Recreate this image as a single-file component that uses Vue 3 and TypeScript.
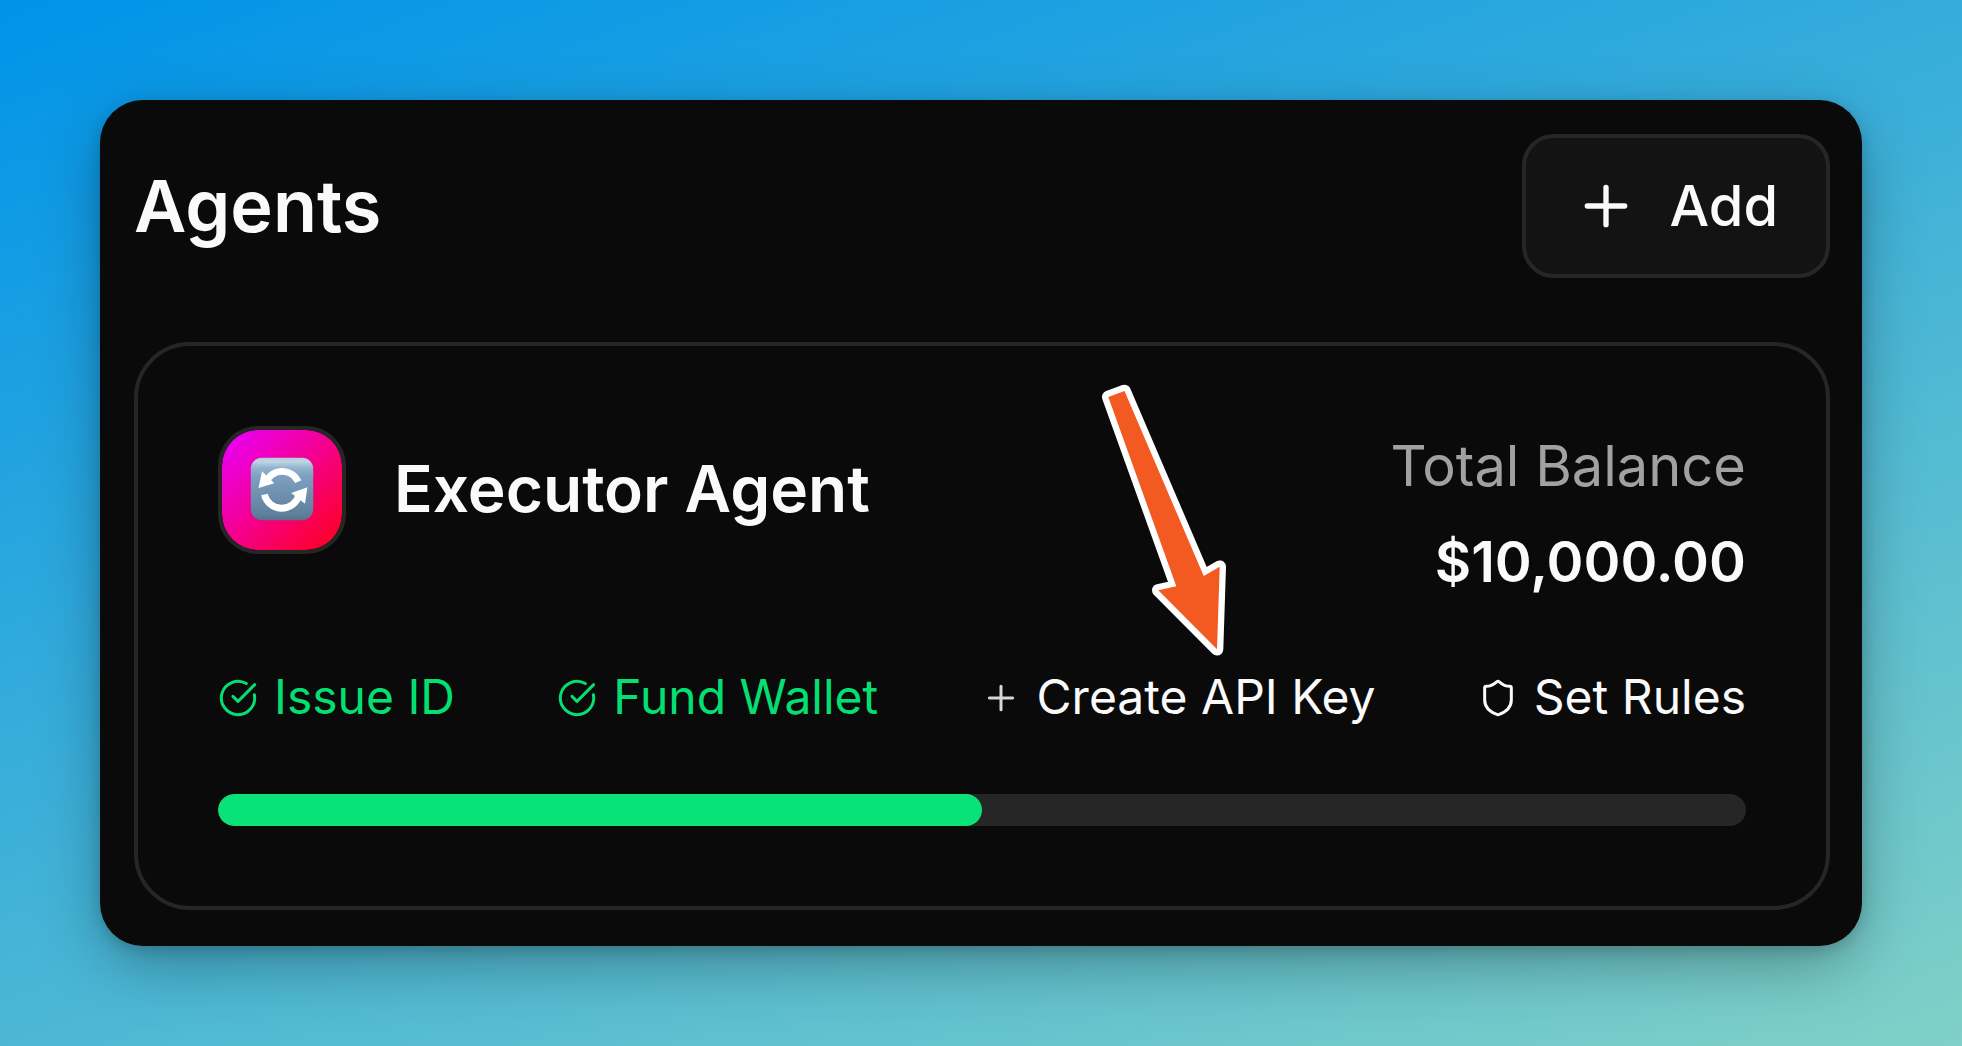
<script setup lang="ts">
type StepIcon = 'check' | 'plus' | 'shield'

interface Step {
  label: string
  icon: StepIcon
  done: boolean
}

const steps: Step[] = [
  { label: 'Issue ID', icon: 'check', done: true },
  { label: 'Fund Wallet', icon: 'check', done: true },
  { label: 'Create API Key', icon: 'plus', done: false },
  { label: 'Set Rules', icon: 'shield', done: false },
]

const progress = (steps.filter((s) => s.done).length / steps.length) * 100

const paths: Record<StepIcon, string[]> = {
  check: ['M21.801 10A10 10 0 1 1 17 3.335', 'm9 11 3 3L22 4'],
  plus: ['M5 12h14', 'M12 5v14'],
  shield: [
    'M20 13c0 5-3.5 7.5-7.66 8.95a1 1 0 0 1-.67-.01C7.5 20.5 4 18 4 13V6a1 1 0 0 1 1-1c2 0 4.5-1.2 6.24-2.72a1.17 1.17 0 0 1 1.52 0C14.51 3.81 17 5 19 5a1 1 0 0 1 1 1z',
  ],
}
</script>

<template>
  <div class="backdrop">
    <main class="window">
      <header class="header">
        <h1 class="title">Agents</h1>
        <button class="add" type="button">
          <svg class="icon add-icon" viewBox="0 0 24 24">
            <path v-for="d in paths.plus" :key="d" :d="d" />
          </svg>
          <span>Add</span>
        </button>
      </header>

      <section class="card">
        <div class="summary">
          <div class="agent">
            <div class="avatar">
              <svg class="emoji" viewBox="0 0 64 64">
                <defs>
                  <linearGradient id="tile" x1="0" y1="0" x2="0" y2="1">
                    <stop offset="0" stop-color="#b4cbdc" />
                    <stop offset="0.06" stop-color="#c0d5e5" />
                    <stop offset="0.16" stop-color="#93b3cf" />
                    <stop offset="0.3" stop-color="#7da0c0" />
                    <stop offset="0.9" stop-color="#5f809d" />
                    <stop offset="1" stop-color="#577289" />
                  </linearGradient>
                </defs>
                <rect x="0.8" y="0.8" width="62.4" height="62.4" rx="11" fill="url(#tile)" />
                <g fill="none" stroke="#fff" stroke-width="6.8">
                  <path d="M15.5 26.5A17.6 17.6 0 0 1 48.2 24.6" />
                  <path d="M14.4 37.5A17.8 17.8 0 0 0 49 37.8" />
                </g>
                <path d="M12 14.2L8.5 30.9L24.3 26.2Z" fill="#fff" />
                <path d="M57.4 30.2L41.2 36L55 46.8Z" fill="#fff" />
              </svg>
            </div>
            <h2 class="name">Executor Agent</h2>
          </div>
          <div class="balance">
            <span class="balance-label">Total Balance</span>
            <span class="balance-value">$10,000.00</span>
          </div>
        </div>

        <ul class="steps">
          <li v-for="step in steps" :key="step.label" class="step" :class="{ done: step.done }">
            <svg class="icon step-icon" :class="step.icon" viewBox="0 0 24 24">
              <path v-for="d in paths[step.icon]" :key="d" :d="d" />
            </svg>
            <span class="step-label">{{ step.label }}</span>
          </li>
        </ul>

        <div class="track">
          <div class="fill" :style="{ width: progress + '%' }"></div>
        </div>
      </section>
    </main>

    <svg class="arrow" viewBox="0 0 140 290">
      <path d="M18.3 27L34.5 21L113.7 206L129.7 196.7L127 279.3L68.3 220.3L86.3 216.3Z" />
    </svg>
  </div>
</template>

<style>
body {
  margin: 0;
}
</style>

<style scoped>
.backdrop {
  position: relative;
  box-sizing: border-box;
  width: 1962px;
  height: 1046px;
  padding: 100px;
  overflow: hidden;
  background: linear-gradient(160deg, #0093e9 0%, #80d0c7 100%);
  font-family: Inter, sans-serif;
  color: #fafafa;
}

.window {
  box-sizing: border-box;
  height: 846px;
  padding: 34px 32px 36px 34px;
  display: flex;
  flex-direction: column;
  gap: 64px;
  border-radius: 43px;
  background: #0a0a0a;
  box-shadow:
    0 20px 64px -6px rgba(0, 0, 0, 0.34),
    0 4px 14px rgba(0, 0, 0, 0.16);
}

.header {
  display: flex;
  align-items: center;
  justify-content: space-between;
  height: 144px;
}

.title {
  margin: 0;
  font-size: 72px;
  font-weight: 600;
  line-height: 1;
}

.add {
  box-sizing: border-box;
  height: 144px;
  padding: 0 48px;
  display: flex;
  align-items: center;
  gap: 32px;
  border: 4px solid #262626;
  border-radius: 32px;
  background: #131313;
  color: inherit;
  font: 500 56px/80px Inter, sans-serif;
}

.icon {
  flex: none;
  fill: none;
  stroke: currentColor;
  stroke-width: 2;
  stroke-linecap: round;
  stroke-linejoin: round;
}

.add-icon {
  width: 64px;
  height: 64px;
}

.card {
  box-sizing: border-box;
  height: 568px;
  padding: 80px;
  display: flex;
  flex-direction: column;
  gap: 64px;
  border: 4px solid #262626;
  border-radius: 56px;
}

.summary {
  display: flex;
  align-items: flex-start;
  justify-content: space-between;
  height: 176px;
}

.agent {
  display: flex;
  align-items: center;
  gap: 48px;
}

.avatar {
  box-sizing: border-box;
  width: 128px;
  height: 128px;
  display: flex;
  align-items: center;
  justify-content: center;
  padding-bottom: 3px;
  border: 4px solid #262626;
  border-radius: 40px;
  background: linear-gradient(135deg, #e800ff 0%, #f4008c 50%, #ff0015 100%) padding-box;
}

.emoji {
  width: 64px;
  height: 64px;
}

.name {
  margin: 0;
  padding-bottom: 2px;
  font-size: 64px;
  font-weight: 600;
  line-height: 1;
}

.balance {
  display: flex;
  flex-direction: column;
  align-items: flex-end;
  gap: 16px;
  font-size: 56px;
  line-height: 80px;
}

.balance-label {
  color: #a1a1a1;
}

.balance-value {
  font-weight: 600;
}

.steps {
  margin: 0;
  padding: 0;
  height: 64px;
  display: flex;
  justify-content: space-between;
  list-style: none;
  font-size: 48px;
  line-height: 64px;
}

.step {
  display: flex;
  align-items: center;
  gap: 16px;
  white-space: nowrap;
}

.step.done {
  color: #05df72;
}

.step-label {
  padding-bottom: 2px;
}

.step-icon {
  width: 40px;
  height: 40px;
  stroke-width: 1.8;
}

.step-icon.plus {
  opacity: 0.85;
}

.track {
  height: 32px;
  border-radius: 16px;
  background: #262626;
  overflow: hidden;
}

.fill {
  height: 100%;
  border-radius: 16px;
  background: #08e276;
}

/* Callout arrow laid over the card */
.arrow {
  position: absolute;
  left: 1090px;
  top: 370px;
  width: 140px;
  height: 290px;
}

.arrow path {
  fill: #f25a22;
  stroke: #fff;
  stroke-width: 12.6;
  stroke-linejoin: round;
  paint-order: stroke;
}
</style>
